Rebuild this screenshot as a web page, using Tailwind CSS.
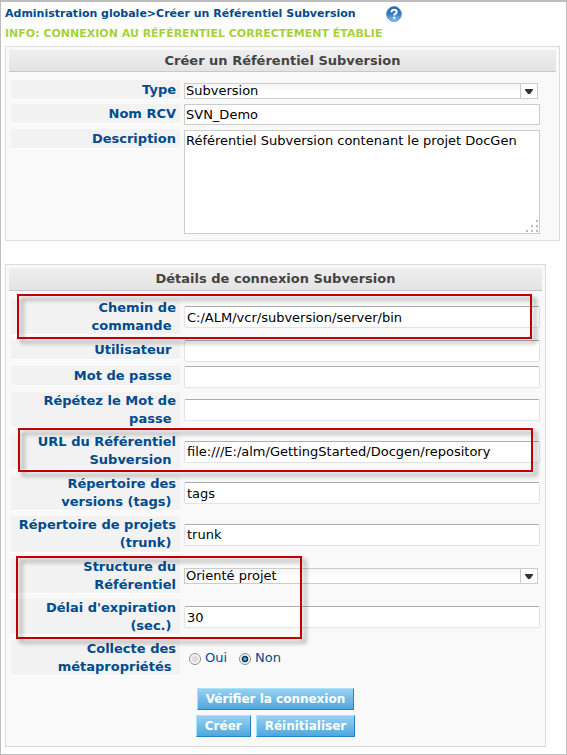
<!DOCTYPE html>
<html lang="fr">
<head>
<meta charset="utf-8">
<title>Créer un Référentiel Subversion</title>
<script src="https://cdn.jsdelivr.net/npm/@tailwindcss/browser@4"></script>
</head>
<body class="bg-white font-['DejaVu_Sans',Verdana,sans-serif] text-[13px] text-black">
<main class="min-h-screen border border-t-2 border-[#bebebe] pl-1 pr-1.5 pb-1.5">
  <header class="flex items-center gap-[30px] h-6 whitespace-nowrap">
    <h1 class="text-[11px] font-bold text-[#004b8d]">Administration globale&gt;Créer un Référentiel Subversion</h1>
    <a href="#" aria-label="Aide" class="block shrink-0">
      <svg class="block w-4 h-4" viewBox="0 0 16 16">
        <defs><linearGradient id="help" x1="0" y1="0" x2="0" y2="1"><stop offset="0" stop-color="#1c5fa8"/><stop offset=".5" stop-color="#2f7cc4"/><stop offset="1" stop-color="#8ec9f2"/></linearGradient></defs>
        <circle cx="8" cy="8" r="7.4" fill="url(#help)" stroke="#5b89b8" stroke-width=".9"/>
        <path d="M5.4 6.3C5.4 4.5 6.5 3.7 8 3.7s2.7.8 2.7 2.2C10.7 7.6 8.2 7.600 8.2 9.5" fill="none" stroke="#fff" stroke-width="2"/>
        <rect x="7.1" y="10.7" width="2.2" height="2" fill="#fff"/>
      </svg>
    </a>
  </header>
  <p class="h-5 leading-4 text-[11px] font-bold text-[#a8d03c] whitespace-nowrap">INFO: CONNEXION AU RÉFÉRENTIEL CORRECTEMENT ÉTABLIE</p>

  <form>
    <section class="border border-[#dcdcdc] bg-[#f9f9f9] p-[3px] pb-1.5">
      <h2 class="h-[22px] leading-[22px] mb-2 border-b border-[#c8c8c8] bg-linear-to-b from-[#efefef] to-[#e4e4e4] text-center font-bold text-[#444]">Créer un Référentiel Subversion</h2>
      <div class="flex items-start gap-1 pl-0.5 pr-4 h-6">
        <label for="type" class="w-[169px] shrink-0 h-5 leading-5 pr-1 border-b border-white bg-[#f2f2f2] text-right font-bold text-[#004b8d]">Type</label>
        <div class="relative flex-1 mt-[3px] mr-0.5">
          <select id="type" class="block appearance-none w-full h-4 leading-[14px] pl-px border border-[#ccc] bg-linear-to-b from-[#f4f4f4] to-white to-60%"><option>Subversion</option></select>
          <span class="pointer-events-none absolute right-0 inset-y-0 w-[18px] border border-[#ccc] bg-white flex items-center justify-center"><svg class="w-2 h-[5px]" viewBox="0 0 8 5"><path d="M0 0h8v1L5 5H3L0 1z" fill="#333"/></svg></span>
        </div>
      </div>
      <div class="flex items-start gap-1 pl-0.5 pr-4 h-[25px]">
        <label for="nom" class="w-[169px] shrink-0 h-5 leading-5 pr-1 border-b border-white bg-[#f2f2f2] text-right font-bold text-[#004b8d]">Nom RCV</label>
        <input id="nom" value="SVN_Demo" class="flex-1 min-w-0 h-[21px] px-px border border-[#ccc] bg-white">
      </div>
      <div class="flex items-start gap-1 pl-0.5 pr-4">
        <label for="desc" class="w-[169px] shrink-0 h-5 leading-5 pr-1 border-b border-white bg-[#f2f2f2] text-right font-bold text-[#004b8d]">Description</label>
        <div class="relative flex-1 mt-px">
          <textarea id="desc" class="block resize-none w-full h-[104px] px-px py-0.5 leading-4 border border-[#ccc] bg-white">Référentiel Subversion contenant le projet DocGen</textarea>
          <svg class="pointer-events-none absolute right-0.5 bottom-0.5 w-3 h-3" viewBox="0 0 12 12" fill="#bbb"><path d="M10 0h2v2h-2zM5 5h2v2H5zM10 5h2v2h-2zM0 10h2v2H0zM5 10h2v2H5zM10 10h2v2h-2z"/></svg>
        </div>
      </div>
    </section>

    <section class="mt-[23px] mr-3.5 border border-[#dcdcdc] bg-[#f9f9f9] p-[3px] pb-[9px]">
      <h2 class="h-[23px] leading-[22px] mb-2 border-b border-[#c8c8c8] bg-linear-to-b from-[#efefef] to-[#e4e4e4] text-center font-bold text-[#444]">Détails de connexion Subversion</h2>

      <div class="relative flex items-center gap-1 pl-0.5 pr-0.5 mb-[5px]">
        <label for="chemin" class="w-[169px] shrink-0 h-9 leading-[18px] pr-1 border-b border-white bg-[#f2f2f2] text-right font-bold text-[#004b8d]">Chemin de<br>commande&nbsp;</label>
        <input id="chemin" value="C:/ALM/vcr/subversion/server/bin" class="flex-1 min-w-0 h-[22px] px-0.5 rounded-xs border border-[#e2e3ea] border-t-[#abadb3] bg-white">
        <div class="pointer-events-none absolute left-2 right-2.5 -top-[5px] -bottom-1 border-2 border-[#c00000] drop-shadow-[4px_4px_2px_rgba(0,0,0,0.4)]"></div>
      </div>
      <div class="flex items-start gap-1 pl-0.5 pr-0.5 mb-1">
        <label for="util" class="w-[169px] shrink-0 h-5 leading-5 pr-1 border-b border-white bg-[#f2f2f2] text-right font-bold text-[#004b8d]">Utilisateur&nbsp;</label>
        <input id="util" class="flex-1 min-w-0 h-[22px] px-0.5 rounded-xs border border-[#e2e3ea] border-t-[#abadb3] bg-white">
      </div>
      <div class="flex items-start gap-1 pl-0.5 pr-0.5 mb-1">
        <label for="mdp" class="w-[169px] shrink-0 h-5 leading-5 pr-1 border-b border-white bg-[#f2f2f2] text-right font-bold text-[#004b8d]">Mot de passe&nbsp;</label>
        <input id="mdp" type="password" class="flex-1 min-w-0 h-[22px] px-0.5 rounded-xs border border-[#e2e3ea] border-t-[#abadb3] bg-white">
      </div>
      <div class="flex items-center gap-1 pl-0.5 pr-0.5 mb-[5px]">
        <label for="mdp2" class="w-[169px] shrink-0 h-9 leading-[18px] pr-1 border-b border-white bg-[#f2f2f2] text-right font-bold text-[#004b8d]">Répétez le Mot de<br>passe&nbsp;</label>
        <input id="mdp2" type="password" class="flex-1 min-w-0 h-[22px] px-0.5 rounded-xs border border-[#e2e3ea] border-t-[#abadb3] bg-white">
      </div>
      <div class="relative flex items-center gap-1 pl-0.5 pr-0.5 mb-[5px]">
        <label for="url" class="w-[169px] shrink-0 h-[37px] leading-[18px] pr-1 border-b border-white bg-[#f2f2f2] text-right font-bold text-[#004b8d]">URL du Référentiel<br>Subversion&nbsp;</label>
        <input id="url" value="file:///E:/alm/GettingStarted/Docgen/repository" class="flex-1 min-w-0 h-[22px] px-0.5 rounded-xs border border-[#e2e3ea] border-t-[#abadb3] bg-white">
        <div class="pointer-events-none absolute left-[9px] right-[9px] -top-[5px] -bottom-0.5 border-2 border-[#c00000] drop-shadow-[4px_4px_2px_rgba(0,0,0,0.4)]"></div>
      </div>
      <div class="flex items-center gap-1 pl-0.5 pr-0.5 mb-[5px]">
        <label for="tags" class="w-[169px] shrink-0 h-9 leading-[18px] pr-1 border-b border-white bg-[#f2f2f2] text-right font-bold text-[#004b8d]">Répertoire des<br>versions (tags)&nbsp;</label>
        <input id="tags" value="tags" class="flex-1 min-w-0 h-[22px] px-0.5 rounded-xs border border-[#e2e3ea] border-t-[#abadb3] bg-white">
      </div>
      <div class="flex items-center gap-1 pl-0.5 pr-0.5 mb-[5px]">
        <label for="trunk" class="w-[169px] shrink-0 h-[37px] leading-[18px] pr-1 border-b border-white bg-[#f2f2f2] text-right font-bold text-[#004b8d] whitespace-nowrap">Répertoire de projets<br>(trunk)&nbsp;</label>
        <input id="trunk" value="trunk" class="flex-1 min-w-0 h-[22px] px-0.5 rounded-xs border border-[#e2e3ea] border-t-[#abadb3] bg-white">
      </div>
      <div class="relative">
        <div class="flex items-center gap-1 pl-0.5 pr-0.5 mb-[5px]">
          <label for="struct" class="w-[169px] shrink-0 h-9 leading-[18px] pr-1 border-b border-white bg-[#f2f2f2] text-right font-bold text-[#004b8d]">Structure du<br>Référentiel</label>
          <div class="relative flex-1 mr-0.5">
            <select id="struct" class="block appearance-none w-full h-4 leading-[14px] pl-px border border-[#ccc] bg-linear-to-b from-[#f4f4f4] to-white to-60%"><option>Orienté projet</option></select>
            <span class="pointer-events-none absolute right-0 inset-y-0 w-[18px] border border-[#ccc] bg-white flex items-center justify-center"><svg class="w-2 h-[5px]" viewBox="0 0 8 5"><path d="M0 0h8v1L5 5H3L0 1z" fill="#333"/></svg></span>
          </div>
        </div>
        <div class="flex items-center gap-1 pl-0.5 pr-0.5 mb-[5px]">
          <label for="delai" class="w-[169px] shrink-0 h-9 leading-[18px] pr-1 border-b border-white bg-[#f2f2f2] text-right font-bold text-[#004b8d]">Délai d'expiration<br>(sec.)&nbsp;</label>
          <input id="delai" value="30" class="flex-1 min-w-0 h-[22px] px-0.5 rounded-xs border border-[#e2e3ea] border-t-[#abadb3] bg-white">
        </div>
        <div class="pointer-events-none absolute left-[7px] w-[286px] -top-0.5 -bottom-1 border-2 border-[#c00000] drop-shadow-[4px_4px_2px_rgba(0,0,0,0.4)]"></div>
      </div>
      <div role="radiogroup" aria-labelledby="collecte" class="flex items-center gap-1 pl-0.5 pr-0.5">
        <span id="collecte" class="w-[169px] shrink-0 h-9 leading-[18px] pr-1 border-b border-white bg-[#f2f2f2] text-right font-bold text-[#004b8d]">Collecte des<br>métapropriétés&nbsp;</span>
        <div class="flex items-center gap-3 pl-[5px] text-[#004b8d]">
          <label class="flex items-center gap-1"><input type="radio" name="meta" class="appearance-none mt-0.5 w-3 h-3 rounded-full border border-[#8e8f8f] bg-[radial-gradient(circle,#ddd_35%,#f8f8f8_65%)]">Oui</label>
          <label class="flex items-center gap-1"><input type="radio" name="meta" checked class="appearance-none mt-0.5 w-3 h-3 rounded-full border border-[#8e8f8f] bg-[radial-gradient(circle,#5cc0ee_8%,#0b3a5c_35%,#12395a_42%,#eee_52%)]">Non</label>
        </div>
      </div>
      <div class="flex flex-col items-center gap-[5px] mt-3 text-[12px] font-bold text-white">
        <button type="button" class="h-[22px] px-2 border border-[#a6e6fb] border-r-[#1e86c8] border-b-[#1e86c8] bg-linear-to-b from-[#9ad0f0] to-[#4aa8de]">Vérifier la connexion</button>
        <div class="flex gap-[5px]">
          <button type="submit" class="h-[22px] px-2 border border-[#a6e6fb] border-r-[#1e86c8] border-b-[#1e86c8] bg-linear-to-b from-[#9ad0f0] to-[#4aa8de]">Créer</button>
          <button type="reset" class="h-[22px] px-2 border border-[#a6e6fb] border-r-[#1e86c8] border-b-[#1e86c8] bg-linear-to-b from-[#9ad0f0] to-[#4aa8de]">Réinitialiser</button>
        </div>
      </div>
    </section>
  </form>
</main>
</body>
</html>
